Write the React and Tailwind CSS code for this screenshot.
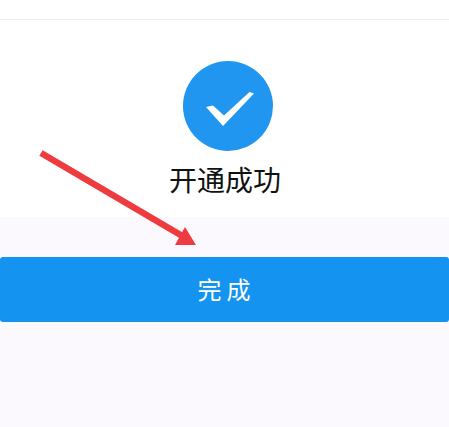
export default function App() {
  const cjk = { fontFamily: '"Noto Sans CJK SC", "Liberation Sans", sans-serif' };
  return (
    <div className="relative w-[449px] h-[427px] overflow-hidden bg-[#fbf9fe]" style={cjk}>
      <div className="h-[217px] bg-white flex flex-col items-center">
        <div className="w-full h-5 border-b border-[#eeeeee]" />
        <div className="mt-[41px] ml-[7px] w-[90px] h-[90px] rounded-full bg-[#2196f0] flex items-center justify-center">
          <svg width="90" height="90" viewBox="0 0 90 90">
            <path d="M23 46 L30 44.5 L41 54.5 L66.5 31 L71 32.5 L40 65 Z" fill="#ffffff" />
          </svg>
        </div>
        <div className="mt-[8px] ml-[1px] text-[28px] leading-[40px] text-[#111111]">开通成功</div>
      </div>
      <div className="mt-[40px] h-[65px] bg-[#1493f1] rounded-[3px] flex items-center justify-center">
        <span className="text-[24px] leading-[30px] tracking-[5px] text-white ml-[4px] mb-[1px]">完成</span>
      </div>
      <svg className="absolute left-0 top-0" width="449" height="427" viewBox="0 0 449 427">
        <path d="M41 153 L184 237" stroke="#ee3b3f" strokeWidth="6.5" fill="none" />
        <path d="M185 227 L196 245 L175 245 Z" fill="#ee3b3f" />
      </svg>
    </div>
  );
}
